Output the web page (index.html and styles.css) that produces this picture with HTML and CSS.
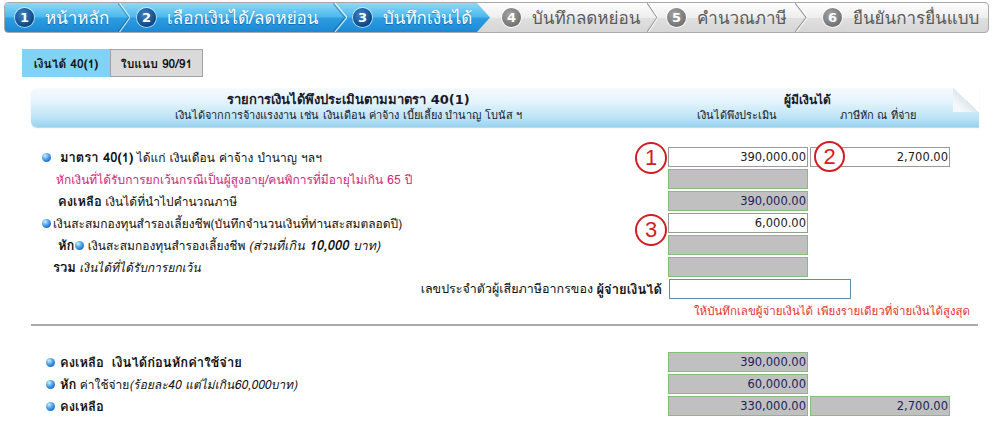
FILE: index.html
```html
<!DOCTYPE html>
<html lang="th">
<head>
<meta charset="utf-8">
<title>บันทึกเงินได้</title>
<link rel="stylesheet" href="styles.css">
</head>
<body>
<div class="steps">
  <div class="done">
    <div class="step s1"><span class="num">1</span>หน้าหลัก</div>
    <svg class="sep sep1" viewBox="0 0 12 29" preserveAspectRatio="none"><polyline points="0,0 11,14.5 0,29" fill="none" stroke="rgba(10,70,130,0.35)" stroke-width="1.5"/><polyline points="1.5,0 12,14.5 1.5,29" fill="none" stroke="rgba(255,255,255,0.75)" stroke-width="1.2"/></svg>
    <div class="step s2"><span class="num">2</span>เลือกเงินได้/ลดหย่อน</div>
    <svg class="sep sep2" viewBox="0 0 14 29" preserveAspectRatio="none"><polyline points="0,0 12,14.5 0,29" fill="none" stroke="rgba(10,70,130,0.35)" stroke-width="1.5"/><polyline points="2,0 14,14.5 2,29" fill="none" stroke="rgba(255,255,255,0.75)" stroke-width="1.2"/></svg>
    <div class="step s3"><span class="num">3</span>บันทึกเงินได้</div>
  </div>
  <div class="step s4"><span class="num">4</span>บันทึกลดหย่อน</div>
  <svg class="sep sep3" viewBox="0 0 11 29" preserveAspectRatio="none"><polyline points="0,0 10,14.5 0,29" fill="none" stroke="#9c9c9c" stroke-width="1.2"/><polyline points="1.5,0 11,14.5 1.5,29" fill="none" stroke="#ffffff" stroke-width="1"/></svg>
  <div class="step s5"><span class="num">5</span>คำนวณภาษี</div>
  <svg class="sep sep4" viewBox="0 0 13 29" preserveAspectRatio="none"><polyline points="0,0 11,14.5 0,29" fill="none" stroke="#9c9c9c" stroke-width="1.2"/><polyline points="1.5,0 12.5,14.5 1.5,29" fill="none" stroke="#ffffff" stroke-width="1"/></svg>
  <div class="step s6"><span class="num">6</span>ยืนยันการยื่นแบบ</div>
</div>

<div class="tabs">
  <div class="tab active">เงินได้ 40(1)</div>
  <div class="tab other">ใบแนบ 90/91</div>
</div>

<div class="ribbon">
  <div class="rb-left">
    <div class="rb-title">รายการเงินได้พึงประเมินตามมาตรา 40(1)</div>
    <div class="rb-sub">เงินได้จากการจ้างแรงงาน เช่น เงินเดือน ค่าจ้าง เบี้ยเลี้ยง บำนาญ โบนัส ฯ</div>
  </div>
  <div class="rb-right">
    <div class="rb-title2">ผู้มีเงินได้</div>
    <div class="rb-cols"><span>เงินได้พึงประเมิน</span><span>ภาษีหัก ณ ที่จ่าย</span></div>
  </div>
</div>

<div class="form">
  <div class="lbl r1"><span class="dot"></span><b>มาตรา 40(1)</b>&nbsp;ได้แก่ เงินเดือน ค่าจ้าง บำนาญ ฯลฯ</div>
  <div class="cell"><div class="box">390,000.00</div><span class="mark m1">1</span></div>
  <div class="cell"><div class="box">2,700.00</div><span class="mark m2">2</span></div>

  <div class="lbl r2 pink">หักเงินที่ได้รับการยกเว้นกรณีเป็นผู้สูงอายุ/คนพิการที่มีอายุไม่เกิน 65 ปี</div>
  <div class="box ro"></div>
  <div></div>

  <div class="lbl r3"><b>คงเหลือ</b>&nbsp;เงินได้ที่นำไปคำนวณภาษี</div>
  <div class="box ro">390,000.00</div>
  <div></div>

  <div class="lbl r4"><span class="dot"></span>เงินสะสมกองทุนสำรองเลี้ยงชีพ(บันทึกจำนวนเงินที่ท่านสะสมตลอดปี)</div>
  <div class="cell"><div class="box">6,000.00</div><span class="mark m3">3</span></div>
  <div></div>

  <div class="lbl r5"><b>หัก</b><span class="dot"></span>&nbsp;เงินสะสมกองทุนสำรองเลี้ยงชีพ&nbsp;<i>(ส่วนที่เกิน <b>10,000</b> บาท)</i></div>
  <div class="box ro"></div>
  <div></div>

  <div class="lbl r6"><b>รวม</b>&nbsp;<i>เงินได้ที่ได้รับการยกเว้น</i></div>
  <div class="box ro"></div>
  <div></div>

  <div class="lbl r7">เลขประจำตัวผู้เสียภาษีอากรของ&nbsp;<b>ผู้จ่ายเงินได้</b></div>
  <div class="box payer"></div>

  <div class="note">ให้บันทึกเลขผู้จ่ายเงินได้ เพียงรายเดียวที่จ่ายเงินได้สูงสุด</div>
</div>

<div class="rule"></div>

<div class="form bottom">
  <div class="lbl rb"><span class="dot"></span><b>คงเหลือ&nbsp; เงินได้ก่อนหักค่าใช้จ่าย</b></div>
  <div class="box ro">390,000.00</div>
  <div></div>

  <div class="lbl rb"><span class="dot"></span><b>หัก</b>&nbsp;ค่าใช้จ่าย<i>(ร้อยละ40 แต่ไม่เกิน60,000บาท)</i></div>
  <div class="box ro">60,000.00</div>
  <div></div>

  <div class="lbl rb"><span class="dot"></span><b>คงเหลือ</b></div>
  <div class="box ro">330,000.00</div>
  <div class="box ro">2,700.00</div>
</div>
</body>
</html>
```
FILE: styles.css
```css
body {
  margin: 0;
  background: #fff;
  color: #111;
  font-family: Tahoma, Waree, Loma, "Noto Sans Thai Looped", Garuda, "DejaVu Sans", sans-serif;
  font-size: 12px;
}

/* ---------- step bar ---------- */
.steps {
  display: flex;
  box-sizing: border-box;
  width: 985px;
  height: 31px;
  margin: 2px 0 0 4px;
  border: 1px solid #a9a9a9;
  border-radius: 4px;
  overflow: hidden;
  background: linear-gradient(#fdfdfd, #eeeeee 50%, #e0e0e0 52%, #d6d6d6);
}
.done {
  display: flex;
  width: 485px;
  flex: none;
  background: linear-gradient(#8fd8f7, #4cb8ed 48%, #2c9de1 52%, #1d88d4);
  clip-path: polygon(0 0, calc(100% - 13px) 0, 100% 50%, calc(100% - 13px) 100%, 0 100%);
}
.step {
  display: flex;
  align-items: center;
  gap: 11px;
  box-sizing: border-box;
  flex: none;
  font-size: 17px;
  white-space: nowrap;
}
.done .step {
  color: #fff;
  text-shadow: 0 1px 1px rgba(0, 50, 110, 0.45);
}
.steps > .step { color: #5a5a5a; }
.num {
  width: 19px;
  height: 19px;
  border-radius: 50%;
  display: flex;
  align-items: center;
  justify-content: center;
  flex: none;
  color: #fff;
  font: bold 13px "DejaVu Sans", sans-serif;
  text-shadow: none;
}
.done .num {
  background: radial-gradient(circle at 40% 35%, #3d86c8, #0f4683 70%, #0b3564);
  box-shadow: 0 0 0 1px rgba(255, 255, 255, 0.6);
}
.steps > .step .num {
  background: radial-gradient(circle at 40% 35%, #a5a5a5, #737373 70%, #666);
  box-shadow: 0 0 0 1px rgba(255, 255, 255, 0.8);
}
.sep { display: block; height: 29px; flex: none; }
.sep1 { width: 12px; }
.sep2 { width: 14px; }
.sep3 { width: 11px; }
.sep4 { width: 13px; }
.s1 { width: 113px; padding-left: 10px; }
.s2 { width: 203px; padding-left: 7px; }
.s3 { width: 143px; padding-left: 6px; }
.s4 { width: 157px; padding-left: 12px; }
.s5 { width: 137px; padding-left: 9px; }
.s6 { flex: 1; padding-left: 15px; }

/* ---------- tabs ---------- */
.tabs {
  display: flex;
  margin: 16px 0 0 22px;
}
.tab {
  height: 28px;
  box-sizing: border-box;
  display: flex;
  align-items: center;
  justify-content: center;
  font-weight: bold;
  font-size: 12px;
  color: #111;
}
.tab.active { width: 88px; background: #80d3f5; }
.tab.other { width: 93px; background: #dadada; border: 1px solid #a3a3a3; }

/* ---------- header ribbon ---------- */
.ribbon {
  position: relative;
  display: flex;
  box-sizing: border-box;
  width: 948px;
  height: 39px;
  margin: 11px 0 0 31px;
  padding-top: 4px;
  border-radius: 6px 0 0 6px;
  background: linear-gradient(#f6fbfe, #e4f4fc 35%, #bde4f6 75%, #98d3f1);
  box-shadow: 0 1px 1px rgba(120, 170, 200, 0.5);
  color: #1a1a2a;
  font-family: Tahoma, "DejaVu Sans", sans-serif;
}
.ribbon::after {
  content: "";
  position: absolute;
  top: 0;
  right: 0;
  width: 26px;
  height: 24px;
  background: linear-gradient(to bottom left, #fff 50%, #dfe7ec 50%, #f4f8fa 80%);
}
.rb-left { width: 635px; text-align: center; }
.rb-title { font-weight: bold; font-size: 13px; line-height: 16px; }
.rb-sub { font-size: 11px; line-height: 14px; margin-top: 1px; }
.rb-right { width: 282px; text-align: center; }
.rb-title2 { font-weight: bold; font-size: 12px; line-height: 16px; }
.rb-cols {
  display: grid;
  grid-template-columns: 142px 140px;
  font-size: 11px;
  line-height: 14px;
  margin-top: 1px;
}

/* ---------- form grid ---------- */
.form {
  display: grid;
  grid-template-columns: 635px 140px 140px;
  grid-auto-rows: 20px;
  column-gap: 2px;
  row-gap: 2px;
  margin: 20px 0 0 31px;
}
.lbl {
  display: flex;
  align-items: center;
  white-space: nowrap;
  box-sizing: border-box;
}
.lbl b { font-size: 13px; }
.lbl b, .lbl i { white-space: pre; }
.r5 i { font-size: 12.5px; }
.dot {
  display: inline-block;
  width: 9px;
  height: 9px;
  border-radius: 50%;
  flex: none;
  background: radial-gradient(circle at 35% 30%, #d4f0ff 0, #69b8f2 30%, #1f6fcc 72%, #124f9e);
}
.r1 { padding-left: 11px; }
.r1 .dot { margin-right: 9px; }
.r2 { padding-left: 25px; }
.pink { color: #cc2a78; }
.r3 { padding-left: 27px; }
.r4 { padding-left: 11px; }
.r4 .dot { margin-right: 2px; }
.r5 { padding-left: 27px; }
.r5 .dot { margin-left: 1px; }
.r6 { padding-left: 22px; }
.r7 { justify-content: flex-end; padding-right: 4px; font-size: 12.5px; }
.rb { padding-left: 15px; }
.rb .dot { margin-right: 5px; }

.cell { position: relative; }
.cell .box { height: 100%; }
.box {
  box-sizing: border-box;
  border: 1px solid #9a9a9a;
  background: #fff;
  text-align: right;
  padding-right: 1px;
  font: 11.5px "DejaVu Sans", sans-serif;
  line-height: 18px;
  color: #222;
}
.box.ro {
  background: #c0c0c0;
  border-color: #86bd78;
  color: #22225e;
}
.box.payer {
  grid-column: 2 / 4;
  width: 182px;
  margin-left: 1px;
  border-color: #4d93bb;
}
.note {
  grid-column: 2 / 4;
  padding-left: 26px;
  white-space: nowrap;
  color: #e0332e;
  font-size: 11.5px;
  line-height: 20px;
}

.mark {
  position: absolute;
  box-sizing: border-box;
  width: 32px;
  height: 32px;
  border: 2px solid #d41c22;
  border-radius: 50%;
  background: #fff;
  color: #d41c22;
  font: 22px "Liberation Sans", Arial, sans-serif;
  line-height: 28px;
  text-align: center;
}
.m1 { left: -33px; top: -5px; }
.m2 { left: 4px; top: -6px; width: 31px; height: 31px; line-height: 27px; }
.m3 { left: -33px; top: 1px; }

.rule {
  width: 947px;
  height: 0;
  margin: 3px 0 0 31px;
  border-top: 2px solid #ababab;
}
.form.bottom { margin-top: 26px; }
```
